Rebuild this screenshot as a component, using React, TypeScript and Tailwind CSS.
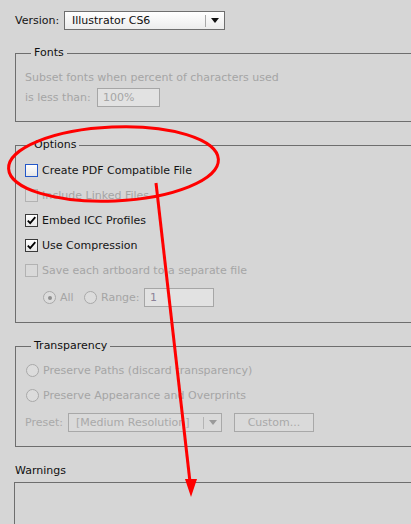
import React from "react";

/** Illustrator "Save options" panel with a red hand-drawn annotation over it. */

const FONT = { fontFamily: '"DejaVu Sans", Verdana, sans-serif' };

function Checkbox({
  checked = false,
  disabled = false,
  focused = false,
}: {
  checked?: boolean;
  disabled?: boolean;
  focused?: boolean;
}) {
  const border = focused
    ? "border-[#2357c8]"
    : disabled
      ? "border-[#b2b2b2]"
      : "border-[#3a3a3a]";
  const fill = disabled
    ? "bg-[#d9d9d9]"
    : "bg-gradient-to-b from-[#ffffff] to-[#e6e6e6]";
  return (
    <span
      className={`flex h-[13px] w-[13px] shrink-0 items-center justify-center border ${border} ${fill}`}
    >
      {checked && (
        <svg width="11" height="11" viewBox="0 0 11 11" aria-hidden>
          <path
            d="M1.8 5.6 L4.2 8.2 L9.3 2.2"
            fill="none"
            stroke="#000"
            strokeWidth="1.8"
          />
        </svg>
      )}
    </span>
  );
}

function Radio({ checked = false }: { checked?: boolean }) {
  return (
    <span className="flex h-[13px] w-[13px] shrink-0 items-center justify-center rounded-full border border-[#a9a9a9] bg-[#dcdcdc]">
      {checked && <span className="h-[4px] w-[4px] rounded-full bg-[#8e8e8e]" />}
    </span>
  );
}

function Arrow({ color }: { color: string }) {
  return (
    <svg width="8" height="5" viewBox="0 0 8 5" aria-hidden>
      <path d="M0 0 H8 L4 5 Z" fill={color} />
    </svg>
  );
}

function Group({
  title,
  className,
  children,
}: {
  title: string;
  className: string;
  children: React.ReactNode;
}) {
  return (
    <fieldset
      className={`ml-[15px] border-y border-l border-r-0 border-[#6e6e6e] pl-[9px] ${className}`}
    >
      <legend className="ml-[6px] px-[3px] text-[11px] leading-[14px] text-[#101010]">
        {title}
      </legend>
      {children}
    </fieldset>
  );
}

function CheckRow({
  label,
  checked,
  disabled,
  focused,
}: {
  label: string;
  checked?: boolean;
  disabled?: boolean;
  focused?: boolean;
}) {
  return (
    <div className="flex h-[25px] items-center gap-[4px]">
      <Checkbox checked={checked} disabled={disabled} focused={focused} />
      <span className={disabled ? "text-[#a5a5a5]" : "text-[#141414]"}>
        {label}
      </span>
    </div>
  );
}

function RadioRow({ label }: { label: string }) {
  return (
    <div className="flex h-[25px] items-center gap-[4px] pl-px">
      <Radio />
      <span className="text-[#a5a5a5]">{label}</span>
    </div>
  );
}

export default function App() {
  return (
    <div
      className="relative h-[524px] w-[411px] overflow-hidden bg-[#d6d6d6] text-[11px] leading-[16px]"
      style={FONT}
    >
      <div className="flex flex-col pt-[11px]">
        {/* Version */}
        <div className="flex items-center pl-[15px]">
          <span className="w-[49px] text-[#141414]">Version:</span>
          <div className="flex h-[19px] w-[161px] items-center border border-[#6e6e6e] bg-gradient-to-b from-[#ffffff] to-[#ececec]">
            <span className="flex-1 pl-[7px] text-[#101010]">Illustrator CS6</span>
            <span className="h-[12px] w-px bg-[#a8a8a8]" />
            <span className="flex w-[18px] justify-center">
              <Arrow color="#111" />
            </span>
          </div>
        </div>

        {/* Fonts */}
        <Group title="Fonts" className="mt-[16px] pb-[14px]">
          <div className="pt-[10px] text-[#a5a5a5]">
            Subset fonts when percent of characters used
          </div>
          <div className="mt-[2px] flex h-[19px] items-center text-[#a5a5a5]">
            <span className="w-[72px]">is less than:</span>
            <span className="flex h-[19px] w-[63px] items-center border border-[#a6a6a6] bg-[#e2e2e2] pl-[5px]">
              100%
            </span>
          </div>
        </Group>

        {/* Options */}
        <Group title="Options" className="mt-[16px] pb-[15px]">
          <div className="pt-[6px]">
            <CheckRow label="Create PDF Compatible File" focused />
            <CheckRow label="Include Linked Files" disabled />
            <CheckRow label="Embed ICC Profiles" checked />
            <CheckRow label="Use Compression" checked />
            <CheckRow label="Save each artboard to a separate file" disabled />
          </div>
          <div className="mt-[5px] flex h-[19px] items-center pl-[18px] text-[#a5a5a5]">
            <Radio checked />
            <span className="ml-[4px] w-[24px]">All</span>
            <Radio />
            <span className="ml-[4px] w-[43px]">Range:</span>
            <span className="flex h-[19px] w-[70px] items-center border border-[#a6a6a6] bg-[#e2e2e2] pl-[5px] text-[#8c8299]">
              1
            </span>
          </div>
        </Group>

        {/* Transparency */}
        <Group title="Transparency" className="mt-[16px] pb-[14px]">
          <div className="pt-[5px]">
            <RadioRow label="Preserve Paths (discard transparency)" />
            <RadioRow label="Preserve Appearance and Overprints" />
          </div>
          <div className="mt-[5px] flex h-[19px] items-center text-[#a9a9a9]">
            <span className="w-[43px]">Preset:</span>
            <div className="flex h-[19px] w-[154px] items-center border border-[#a8a8a8] bg-[#dadada]">
              <span className="flex-1 pl-[7px]">[Medium Resolution]</span>
              <span className="h-[12px] w-px bg-[#b4b4b4]" />
              <span className="flex w-[17px] justify-center">
                <Arrow color="#9a9a9a" />
              </span>
            </div>
            <span className="ml-[12px] flex h-[19px] w-[80px] items-center justify-center border border-[#a8a8a8] bg-[#dadada]">
              Custom...
            </span>
          </div>
        </Group>

        {/* Warnings */}
        <div className="mt-[16px] pl-[15px] text-[#101010]">Warnings</div>
        <div className="ml-[14px] mt-[3px] h-[60px] border-l border-t border-[#6e6e6e]" />
      </div>

      {/* red annotation */}
      <svg
        className="pointer-events-none absolute left-0 top-0"
        width="411"
        height="524"
        viewBox="0 0 411 524"
        aria-hidden
      >
        <ellipse
          cx="113.5"
          cy="164"
          rx="105"
          ry="37"
          transform="rotate(-2.5 113.5 164)"
          fill="none"
          stroke="#ff0000"
          strokeWidth="3"
        />
        <line x1="156" y1="183" x2="190" y2="482" stroke="#ff0000" strokeWidth="3" />
        <path d="M185 479 L197 479 L191 497 Z" fill="#ff0000" />
      </svg>
    </div>
  );
}
